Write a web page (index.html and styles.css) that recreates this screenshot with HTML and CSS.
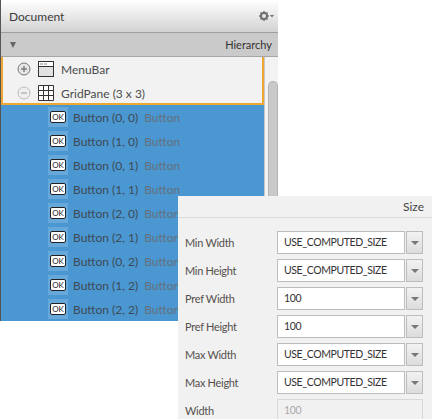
FILE: index.html
```html
<!DOCTYPE html>
<html lang="en">
    <head>
        <meta charset="utf-8" />
        <title>Document hierarchy</title>
        <link rel="stylesheet" href="styles.css">
    </head>
    <body>
        <div class="doc">
            <div class="doc_head">
                <span>Document</span>
                <span class="gear">
                    <svg width="15" height="10" viewBox="0 0 15 10">
                        <circle cx="5" cy="5" r="3" fill="none" stroke="#707070" stroke-width="2"/>
                        <path d="M5 0v2M5 8v2M0 5h2M8 5h2M1.5 1.5l1.4 1.4M7.1 7.1l1.4 1.4M1.5 8.5l1.4-1.4M7.1 2.9l1.4-1.4" stroke="#707070" stroke-width="1.5"/>
                        <path d="M11 4h4l-2 2.5z" fill="#707070"/>
                    </svg>
                </span>
            </div>
            <div class="doc_sub">
                <svg width="6" height="6" viewBox="0 0 6 6"><path d="M0 0h6L3 6z" fill="#666"/></svg>
                <span>Hierarchy</span>
            </div>
            <div class="doc_body">
                <div class="tree">
                    <div class="picked">
                        <div class="row">
                            <svg class="toggle" width="14" height="14" viewBox="0 0 14 14">
                                <circle cx="7" cy="7" r="6" fill="#e4e4e4" stroke="#777"/>
                                <path d="M4 7h6M7 4v6" stroke="#555"/>
                            </svg>
                            <svg class="kind" width="16" height="16" viewBox="0 0 16 16">
                                <rect x="0.5" y="0.5" width="15" height="15" fill="#e2e2e2" stroke="#333"/>
                                <rect x="1" y="1" width="14" height="4" fill="#fff"/>
                                <path d="M0 5.5h16" stroke="#333"/>
                                <path d="M2 3h3M6 3h3" stroke="#888"/>
                            </svg>
                            <span class="name">MenuBar</span>
                        </div>
                        <div class="row">
                            <svg class="toggle" width="14" height="14" viewBox="0 0 14 14">
                                <circle cx="7" cy="7" r="6" fill="#eee" stroke="#bbb"/>
                                <path d="M4 7h6" stroke="#999"/>
                            </svg>
                            <svg class="kind" width="16" height="16" viewBox="0 0 16 16">
                                <path d="M.5.5h15v15H.5zM5.5 0v16M10.5 0v16M0 5.5h16M0 10.5h16" fill="#fff" stroke="#333"/>
                            </svg>
                            <span class="name">GridPane (3 x 3)</span>
                        </div>
                    </div>
                    <div class="kids">
                        <div class="kid"><span class="ok"><b>OK</b></span><span class="name">Button (0, 0)</span><span class="hint">Button</span></div>
                        <div class="kid"><span class="ok"><b>OK</b></span><span class="name">Button (1, 0)</span><span class="hint">Button</span></div>
                        <div class="kid"><span class="ok"><b>OK</b></span><span class="name">Button (0, 1)</span><span class="hint">Button</span></div>
                        <div class="kid"><span class="ok"><b>OK</b></span><span class="name">Button (1, 1)</span><span class="hint">Button</span></div>
                        <div class="kid"><span class="ok"><b>OK</b></span><span class="name">Button (2, 0)</span><span class="hint">Button</span></div>
                        <div class="kid"><span class="ok"><b>OK</b></span><span class="name">Button (2, 1)</span><span class="hint">Button</span></div>
                        <div class="kid"><span class="ok"><b>OK</b></span><span class="name">Button (0, 2)</span><span class="hint">Button</span></div>
                        <div class="kid"><span class="ok"><b>OK</b></span><span class="name">Button (1, 2)</span><span class="hint">Button</span></div>
                        <div class="kid"><span class="ok"><b>OK</b></span><span class="name">Button (2, 2)</span><span class="hint">Button</span></div>
                    </div>
                </div>
                <div class="scroll"><div class="thumb"></div></div>
            </div>
        </div>

        <div class="size">
            <div class="size_head">Size</div>
            <div class="size_rows">
                <div class="prop"><label>Min Width</label><div class="field">USE_COMPUTED_SIZE</div><div class="drop"></div></div>
                <div class="prop"><label>Min Height</label><div class="field">USE_COMPUTED_SIZE</div><div class="drop"></div></div>
                <div class="prop"><label>Pref Width</label><div class="field">100</div><div class="drop"></div></div>
                <div class="prop"><label>Pref Height</label><div class="field">100</div><div class="drop"></div></div>
                <div class="prop"><label>Max Width</label><div class="field">USE_COMPUTED_SIZE</div><div class="drop"></div></div>
                <div class="prop"><label>Max Height</label><div class="field">USE_COMPUTED_SIZE</div><div class="drop"></div></div>
                <div class="prop"><label>Width</label><div class="field off">100</div></div>
            </div>
        </div>
    </body>
</html>
```

FILE: styles.css
```css
html, body{
    margin: 0;
    height: 419px;
    overflow: hidden;
    background: #fff;
}
body{
    position: relative;
    font-family: Lato, "Noto Sans", sans-serif;
    font-size: 12px;
    color: #444;
}
.doc{
    width: 278px;
    height: 321px;
    box-sizing: border-box;
    border-left: 1px solid #555;
    display: flex;
    flex-direction: column;
}
.doc_head{
    height: 33px;
    flex: none;
    box-sizing: border-box;
    padding: 0 4px 0 8px;
    display: flex;
    justify-content: space-between;
    align-items: center;
    background: linear-gradient(#fff, #d2d2d2);
    border-bottom: 1px solid #9e9e9e;
    color: #3c3c3c;
}
.gear{
    display: flex;
    margin-top: -1px;
}
.doc_sub{
    height: 24px;
    flex: none;
    box-sizing: border-box;
    padding: 0 6px 0 9px;
    display: flex;
    justify-content: space-between;
    align-items: center;
    background: #cacaca;
    border-bottom: 1px solid #a6a6a6;
    color: #333;
}
.doc_sub span{
    font-size: 11px;
}
.doc_body{
    flex: 1;
    display: flex;
    min-height: 0;
}
.tree{
    width: 263px;
    flex: none;
    display: flex;
    flex-direction: column;
}
.picked{
    height: 48px;
    flex: none;
    box-sizing: border-box;
    border: 2px solid #f0a732;
    border-top: 0;
    background: #f2f2f2;
}
.row{
    height: 24px;
    display: flex;
    align-items: center;
    padding-left: 14px;
}
.row .name{
    color: #4c4c4c;
    margin-left: 7px;
}
.toggle{
    margin-right: 7px;
}
.kids{
    flex: 1;
    background: #4a97d1;
    overflow: hidden;
}
.kid{
    height: 24px;
    display: flex;
    align-items: center;
    padding-left: 47px;
}
.ok{
    width: 20px;
    height: 20px;
    display: flex;
    align-items: center;
    justify-content: center;
    background: #67a8da;
    margin-right: 5px;
}
.ok b{
    width: 14px;
    height: 10px;
    line-height: 10px;
    text-align: center;
    background: #fff;
    border: 1px solid #222;
    border-radius: 2px;
    font-size: 8px;
    font-weight: normal;
    color: #222;
}
.kid .name{
    color: #3f4a55;
}
.hint{
    color: #66707a;
    margin-left: 6px;
}
.scroll{
    flex: 1;
    background: #f3f3f3;
    border-left: 1px solid #c8c8c8;
    padding: 24px 0 0 3px;
    display: flex;
}
.thumb{
    flex: 1;
    background: #c9c9c9;
    border: 1px solid #b4b4b4;
    border-bottom: 0;
    border-radius: 5px 5px 0 0;
}

/* floating panel, lies over the hierarchy */
.size{
    position: absolute;
    left: 178px;
    top: 196px;
    width: 254px;
    height: 223px;
    background: #f1f1f1;
}
.size_head{
    height: 22px;
    box-sizing: border-box;
    padding-right: 8px;
    text-align: right;
    line-height: 21px;
    border-bottom: 1px solid #dcdcdc;
    color: #444;
}
.size_rows{
    padding: 13px 9px 0 7px;
    display: flex;
    flex-direction: column;
    gap: 5px;
}
.prop{
    height: 23px;
    display: flex;
    align-items: center;
}
.prop label{
    width: 92px;
    flex: none;
    color: #55504c;
    font-size: 11px;
    letter-spacing: -0.3px;
}
.field{
    flex: 1;
    min-width: 0;
    height: 23px;
    box-sizing: border-box;
    border: 1px solid #bdbdbd;
    background: #fff;
    padding-left: 6px;
    line-height: 21px;
    font-size: 10.5px;
    letter-spacing: -0.4px;
    color: #333;
}
.field.off{
    background: #f1f1f1;
    border-color: #d8d8d8;
    color: #aaa;
}
.drop{
    width: 17px;
    height: 23px;
    flex: none;
    box-sizing: border-box;
    margin-left: 1px;
    border: 1px solid #bdbdbd;
    background: linear-gradient(#f2f2f2, #dcdcdc);
    display: flex;
    align-items: center;
    justify-content: center;
}
.drop::after{
    content: "";
    border-left: 4px solid transparent;
    border-right: 4px solid transparent;
    border-top: 4px solid #777;
}
```
